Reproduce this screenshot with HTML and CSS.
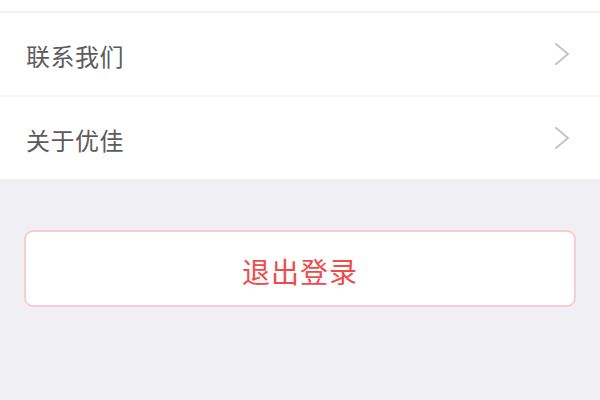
FILE: index.html
```html
<!DOCTYPE html>
<html lang="zh-CN">
<head>
<meta charset="utf-8">
<title>设置</title>
<link rel="stylesheet" href="styles.css">
</head>
<body>
<div class="page">
  <div class="list">
    <div class="top-spacer"></div>
    <div class="row">
      <span class="label">联系我们</span>
      <svg class="chevron" width="16" height="24" viewBox="0 0 16 24"><polyline points="2,2 14,12 2,22" fill="none" stroke="#c4c4c8" stroke-width="2" stroke-linecap="round" stroke-linejoin="round"/></svg>
    </div>
    <div class="row">
      <span class="label">关于优佳</span>
      <svg class="chevron" width="16" height="24" viewBox="0 0 16 24"><polyline points="2,2 14,12 2,22" fill="none" stroke="#c4c4c8" stroke-width="2" stroke-linecap="round" stroke-linejoin="round"/></svg>
    </div>
  </div>
  <div class="actions">
    <button class="logout">退出登录</button>
  </div>
</div>
</body>
</html>
```
FILE: styles.css
```css
html, body {
  margin: 0;
  padding: 0;
  background: #efeff4;
  font-family: "Noto Sans CJK SC", "Noto Sans", sans-serif;
}
.page {
  width: 600px;
  height: 400px;
  background: #efeff4;
}
.list {
  background: #ffffff;
}
.top-spacer {
  height: 11px;
}
.row {
  height: 82px;
  border-top: 2px solid #f4f4f6;
  display: flex;
  align-items: center;
  justify-content: space-between;
  padding: 0 30px 0 26px;
}
.label {
  font-size: 24px;
  color: #5c5c5c;
  letter-spacing: 0.5px;
  line-height: 1;
  padding-top: 4px;
}
.chevron {
  display: block;
}
.actions {
  padding: 51px 24px 0 24px;
}
.logout {
  display: block;
  width: 100%;
  height: 77px;
  background: #ffffff;
  border: 2px solid #f7cdd0;
  border-radius: 9px;
  color: #f04a4a;
  font-family: "Noto Sans CJK SC", "Noto Sans", sans-serif;
  font-size: 28px;
  letter-spacing: 1px;
  padding: 0;
  padding-top: 4px;
}
```
